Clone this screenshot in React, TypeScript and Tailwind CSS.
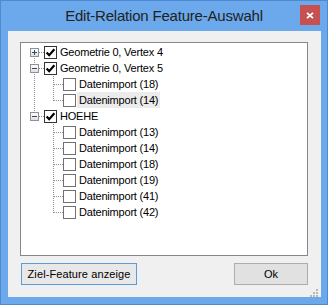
import React from "react";

type Seg = "none" | "full" | "top" | "bottom";

type Row = {
  label: string;
  level: 0 | 1;
  checked: boolean;
  root: Seg;
  child?: Seg;
  expander?: "+" | "-";
  selected?: boolean;
};

const rows: Row[] = [
  { label: "Geometrie 0, Vertex 4", level: 0, checked: true, root: "bottom", expander: "+" },
  { label: "Geometrie 0, Vertex 5", level: 0, checked: true, root: "full", expander: "-" },
  { label: "Datenimport (18)", level: 1, checked: false, root: "full", child: "full" },
  { label: "Datenimport (14)", level: 1, checked: false, root: "full", child: "top", selected: true },
  { label: "HOEHE", level: 0, checked: true, root: "top", expander: "-" },
  { label: "Datenimport (13)", level: 1, checked: false, root: "none", child: "full" },
  { label: "Datenimport (14)", level: 1, checked: false, root: "none", child: "full" },
  { label: "Datenimport (18)", level: 1, checked: false, root: "none", child: "full" },
  { label: "Datenimport (19)", level: 1, checked: false, root: "none", child: "full" },
  { label: "Datenimport (41)", level: 1, checked: false, root: "none", child: "full" },
  { label: "Datenimport (42)", level: 1, checked: false, root: "none", child: "top" },
];

const DOT = { stroke: "#8c8c8c", strokeWidth: 1, strokeDasharray: "1 1" };

// one 19px column of the tree's dotted connector lines
function Guide({ v, stub, expander }: { v: Seg; stub?: boolean; expander?: "+" | "-" }) {
  return (
    <svg width="19" height="16" className="shrink-0" shapeRendering="crispEdges">
      {v === "full" && <line x1="9.5" y1="0" x2="9.5" y2="16" {...DOT} />}
      {v === "top" && <line x1="9.5" y1="0" x2="9.5" y2="9" {...DOT} />}
      {v === "bottom" && <line x1="9.5" y1="8" x2="9.5" y2="16" {...DOT} />}
      {stub && <line x1="10" y1="8.5" x2="19" y2="8.5" {...DOT} />}
      {expander && (
        <g>
          <defs>
            <linearGradient id="exp" x1="0" y1="0" x2="0" y2="1">
              <stop offset="0" stopColor="#ffffff" />
              <stop offset="1" stopColor="#dedede" />
            </linearGradient>
          </defs>
          <rect x="5.5" y="4.5" width="8" height="8" fill="url(#exp)" stroke="#919191" />
          <line x1="7" y1="8.5" x2="12" y2="8.5" stroke="#2c4a78" />
          {expander === "+" && <line x1="9.5" y1="6" x2="9.5" y2="11" stroke="#2c4a78" />}
        </g>
      )}
    </svg>
  );
}

function CheckBox({ checked }: { checked: boolean }) {
  return (
    <div
      className={`mt-[2px] h-[13px] w-[13px] shrink-0 self-start border bg-white ${
        checked ? "border-[#333333]" : "border-[#707070]"
      }`}
    >
      {checked ? (
        <svg width="11" height="11" viewBox="0 0 11 11">
          <path d="M1.6 5.4 L4.2 8.2 L9.4 2.2" fill="none" stroke="#000" strokeWidth="2.2" />
        </svg>
      ) : null}
    </div>
  );
}

function TreeRow({ row }: { row: Row }) {
  return (
    <div className="flex h-[16px] items-center">
      <Guide v={row.root} stub={row.level === 0} expander={row.expander} />
      {row.level === 1 ? <Guide v={row.child ?? "none"} stub /> : null}
      <CheckBox checked={row.checked} />
      <span
        className={`ml-px h-[16px] px-[2px] text-[11px] leading-[16px] tracking-[-0.2px] text-black ${
          row.selected ? "bg-[#ebebeb]" : ""
        }`}
      >
        {row.label}
      </span>
    </div>
  );
}

export default function App() {
  return (
    <div className="flex h-[305px] w-[328px] flex-col border border-[#4f8ad0] bg-[#6ba8ec] font-['Liberation_Sans',Arial,sans-serif]">
      {/* title bar */}
      <div className="flex h-[30px] shrink-0">
        <div className="w-[27px] shrink-0" />
        <div className="flex-1 pt-[6px] text-center text-[15px] leading-[17px] tracking-[-0.2px] text-[#222222]">
          Edit-Relation Feature-Auswahl
        </div>
        <div className="w-[27px] shrink-0 pt-[4px]">
          <div className="flex h-[20px] w-[20px] items-center justify-center bg-[#c75050]">
            <svg width="8" height="7" viewBox="0 0 8 7">
              <path d="M1 0.8 L7 6.2 M7 0.8 L1 6.2" stroke="#ffffff" strokeWidth="1.8" />
            </svg>
          </div>
        </div>
      </div>

      {/* client area */}
      <div className="relative ml-[7px] flex h-[266px] w-[313px] flex-col bg-[#f0f0f0]">
        <div className="ml-[12px] mt-[11px] h-[214px] w-[288px] border border-[#828790] bg-white pl-[4px] pt-px">
          {rows.map((row, i) => (
            <TreeRow key={i} row={row} />
          ))}
        </div>

        <div className="mt-[7px] flex px-[13px]">
          <button
            type="button"
            className="h-[22px] w-[116px] border border-[#5b9bd9] bg-[#e8e8e8] text-[11px] leading-[20px] tracking-[0.1px] text-black"
          >
            Ziel-Feature anzeige
          </button>
          <button
            type="button"
            className="ml-auto h-[22px] w-[74px] border border-[#adadad] bg-[#e1e1e1] text-[11px] leading-[20px] text-black"
          >
            Ok
          </button>
        </div>

        {/* size grip */}
        <svg width="8" height="8" className="absolute bottom-0 right-[3px]" shapeRendering="crispEdges">
          {[
            [6, 0],
            [3, 3],
            [6, 3],
            [0, 6],
            [3, 6],
            [6, 6],
          ].map(([x, y], i) => (
            <rect key={i} x={x} y={y} width="2" height="2" fill="#b9b9b9" />
          ))}
        </svg>
      </div>
    </div>
  );
}
